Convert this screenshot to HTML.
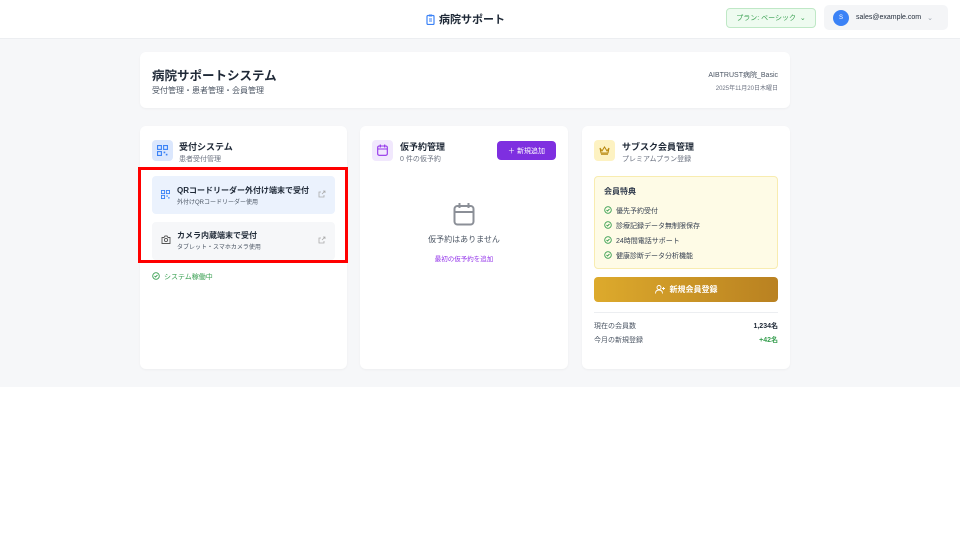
<!DOCTYPE html>
<html><head><meta charset="utf-8"><style>
*{box-sizing:border-box;margin:0;padding:0}
body{width:960px;height:540px;background:#fff;font-family:"Liberation Sans","Noto Sans CJK JP",sans-serif;color:#1f2937;position:relative;overflow:hidden}
.hdr{position:absolute;left:0;top:0;width:960px;height:39px;background:#fff;border-bottom:1px solid #eceef1}
.bg{position:absolute;left:0;top:39px;width:960px;height:348px;background:#f6f7f9}
.abs{position:absolute}
.card{position:absolute;background:#fff;border-radius:6px;box-shadow:0 1px 2px rgba(0,0,0,.04)}
.t{font-size:9px;font-weight:bold}
.s{font-size:7px;color:#6b7280}
.ck{display:inline-block;vertical-align:-1px;margin-right:4px}
</style></head><body>
<div class="hdr"></div><div class="bg"></div>
<div class="abs" style="left:426px;top:11px;font-size:11px;font-weight:bold;display:flex;align-items:center;gap:4px">
<svg width="9" height="11" viewBox="0 0 9 11"><rect x="1" y="1.5" width="7" height="9" rx="1" fill="none" stroke="#3b82f6" stroke-width="1.2"/><rect x="3" y="0.5" width="3" height="2" fill="#3b82f6"/><path d="M3 5h3M3 7h3" stroke="#3b82f6"/></svg>病院サポート</div>
<div class="abs" style="left:726px;top:8px;width:90px;height:20px;background:#eefbf0;border:1px solid #bfe8c6;border-radius:4px;font-size:7px;color:#3aa052;display:flex;align-items:center;justify-content:center">プラン: ベーシック &nbsp;⌄</div>
<div class="abs" style="left:824px;top:5px;width:124px;height:25px;background:#f4f5f7;border-radius:5px;font-size:7px;display:flex;align-items:center">
<div style="width:16px;height:16px;border-radius:50%;background:#3b82f6;color:#fff;font-size:6px;display:flex;align-items:center;justify-content:center;margin:0 7px 0 9px">S</div>sales@example.com<span style="color:#9ca3af;margin-left:6px">⌄</span></div>

<div class="card" style="left:140px;top:52px;width:650px;height:56px">
<div class="abs" style="left:12px;top:13px;font-size:12.5px;font-weight:bold">病院サポートシステム</div>
<div class="abs s" style="left:12px;top:33px;font-size:8px;color:#4b5563">受付管理・患者管理・会員管理</div>
<div class="abs" style="right:12px;top:18px;font-size:7px;color:#4b5563">AIBTRUST病院_Basic</div>
<div class="abs" style="right:12px;top:31px;font-size:6px;color:#6b7280">2025年11月20日木曜日</div>
</div>

<svg width="0" height="0" style="position:absolute"><defs>
<symbol id="qr" viewBox="0 0 10 10"><g fill="none" stroke="#3b82f6" stroke-width="1"><rect x="0.5" y="0.5" width="3.5" height="3.5"/><rect x="6" y="0.5" width="3.5" height="3.5"/><rect x="0.5" y="6" width="3.5" height="3.5"/></g><rect x="6" y="6" width="1.5" height="1.5" fill="#3b82f6"/><rect x="8" y="8" width="1.5" height="1.5" fill="#3b82f6"/></symbol>
<symbol id="ck" viewBox="0 0 8 8"><circle cx="4" cy="4" r="3.3" fill="none" stroke="#3aa052" stroke-width="0.9"/><path d="M2.5 4l1 1 2-2" fill="none" stroke="#3aa052" stroke-width="0.9"/></symbol>
<symbol id="ext" viewBox="0 0 8 8"><path d="M5 1h2v2M7 1L4 4M6 5v2H1V2h2" fill="none" stroke="#aaa" stroke-width="0.8"/></symbol>
</defs></svg>

<div class="card" style="left:140px;top:126px;width:207px;height:243px">
<div class="abs" style="left:12px;top:14px;width:21px;height:21px;background:#dbe7fd;border-radius:4px"></div>
<svg class="abs" style="left:17px;top:19px" width="11" height="11"><use href="#qr"/></svg>
<div class="abs t" style="left:39px;top:14px">受付システム</div>
<div class="abs s" style="left:39px;top:28px">患者受付管理</div>
<div class="abs" style="left:12px;top:50px;width:183px;height:38px;background:#ebf2fd;border-radius:4px"></div>
<svg class="abs" style="left:21px;top:64px" width="9" height="9"><use href="#qr"/></svg>
<div class="abs" style="left:37px;top:59px;font-size:8px;font-weight:bold">QRコードリーダー外付け端末で受付</div>
<div class="abs" style="left:37px;top:71px;font-size:6px;color:#4b5563">外付けQRコードリーダー使用</div>
<div class="abs" style="left:12px;top:96px;width:183px;height:38px;background:#f6f7f9;border-radius:4px"></div>
<svg class="abs" style="left:21px;top:109px" width="10" height="9" viewBox="0 0 10 9"><path d="M1 2.5h2l1-1.5h2l1 1.5h2v6H1z" fill="none" stroke="#555" stroke-width="0.9"/><circle cx="5" cy="5" r="1.6" fill="none" stroke="#555" stroke-width="0.9"/></svg>
<div class="abs" style="left:37px;top:104px;font-size:8px;font-weight:bold">カメラ内蔵端末で受付</div>
<div class="abs" style="left:37px;top:116px;font-size:6px;color:#4b5563">タブレット・スマホカメラ使用</div>
<svg class="abs" style="left:178px;top:64px" width="8" height="8"><use href="#ext"/></svg>
<svg class="abs" style="left:178px;top:110px" width="8" height="8"><use href="#ext"/></svg>
<div class="abs" style="left:12px;top:146px;font-size:7px;color:#3aa052"><svg class="ck" width="8" height="8"><use href="#ck"/></svg>システム稼働中</div>
</div>
<div class="abs" style="left:138px;top:167px;width:210px;height:96px;border:3px solid #f00"></div>

<div class="card" style="left:360px;top:126px;width:208px;height:243px">
<div class="abs" style="left:12px;top:14px;width:21px;height:21px;background:#f1e8fd;border-radius:4px"></div>
<svg class="abs" style="left:17px;top:18px" width="11" height="12" viewBox="0 0 11 12"><rect x="0.7" y="2" width="9.6" height="9.3" rx="1.5" fill="none" stroke="#9333ea" stroke-width="1.1"/><path d="M0.7 5h9.6M3.3 0.5v3M7.7 0.5v3" stroke="#9333ea" stroke-width="1.1"/></svg>
<div class="abs t" style="left:40px;top:14px">仮予約管理</div>
<div class="abs s" style="left:40px;top:28px">0 件の仮予約</div>
<div class="abs" style="left:137px;top:15px;width:59px;height:19px;background:#7e2fe0;border-radius:4px;color:#fff;font-size:7px;display:flex;align-items:center;justify-content:center">＋ 新規追加</div>
<svg class="abs" style="left:93px;top:76px" width="22" height="24" viewBox="0 0 22 24"><rect x="1.5" y="4" width="19" height="18.5" rx="3" fill="none" stroke="#8b8f97" stroke-width="2"/><path d="M1.5 10h19M6.5 1v5M15.5 1v5" stroke="#8b8f97" stroke-width="2"/></svg>
<div class="abs" style="left:0;width:208px;top:108px;text-align:center;font-size:8px;color:#4b5563">仮予約はありません</div>
<div class="abs" style="left:0;width:208px;top:127px;text-align:center;font-size:6.5px;color:#9333ea">最初の仮予約を追加</div>
</div>

<div class="card" style="left:582px;top:126px;width:208px;height:243px">
<div class="abs" style="left:12px;top:14px;width:21px;height:21px;background:#fdf2c2;border-radius:4px"></div>
<svg class="abs" style="left:17px;top:20px" width="11" height="9" viewBox="0 0 11 9"><path d="M1 2l2 3 2.5-4 2.5 4 2-3-1 5H2z M2 8.3h7" fill="none" stroke="#b7860b" stroke-width="1"/></svg>
<div class="abs t" style="left:40px;top:14px">サブスク会員管理</div>
<div class="abs s" style="left:40px;top:28px">プレミアムプラン登録</div>
<div class="abs" style="left:12px;top:50px;width:184px;height:93px;background:#fefbe6;border:1px solid #f8ecb0;border-radius:4px;font-size:7px;color:#374151">
<div style="position:absolute;left:9px;top:9px;font-size:8px;font-weight:bold">会員特典</div>
<div style="position:absolute;left:9px;top:27px;line-height:15px"><svg class="ck" width="8" height="8"><use href="#ck"/></svg>優先予約受付<br><svg class="ck" width="8" height="8"><use href="#ck"/></svg>診療記録データ無制限保存<br><svg class="ck" width="8" height="8"><use href="#ck"/></svg>24時間電話サポート<br><svg class="ck" width="8" height="8"><use href="#ck"/></svg>健康診断データ分析機能</div></div>
<div class="abs" style="left:12px;top:151px;width:184px;height:25px;border-radius:4px;background:linear-gradient(90deg,#ddaa2c,#b98121);color:#fff;font-size:8px;font-weight:bold;display:flex;align-items:center;justify-content:center;gap:5px"><svg width="10" height="9" viewBox="0 0 10 9"><circle cx="4" cy="2.5" r="2" fill="none" stroke="#fff" stroke-width="0.9"/><path d="M0.5 8.5c0-2.5 1.5-3.5 3.5-3.5s3.5 1 3.5 3.5M8.5 2v3M7 3.5h3" fill="none" stroke="#fff" stroke-width="0.9"/></svg>新規会員登録</div>
<div class="abs" style="left:12px;top:186px;width:184px;border-top:1px solid #eceef1"></div>
<div class="abs" style="left:12px;top:195px;font-size:7px;color:#4b5563">現在の会員数</div>
<div class="abs" style="right:12px;top:195px;font-size:7px;font-weight:bold">1,234名</div>
<div class="abs" style="left:12px;top:209px;font-size:7px;color:#4b5563">今月の新規登録</div>
<div class="abs" style="right:12px;top:209px;font-size:7px;font-weight:bold;color:#3aa052">+42名</div>
</div>
</body></html>
